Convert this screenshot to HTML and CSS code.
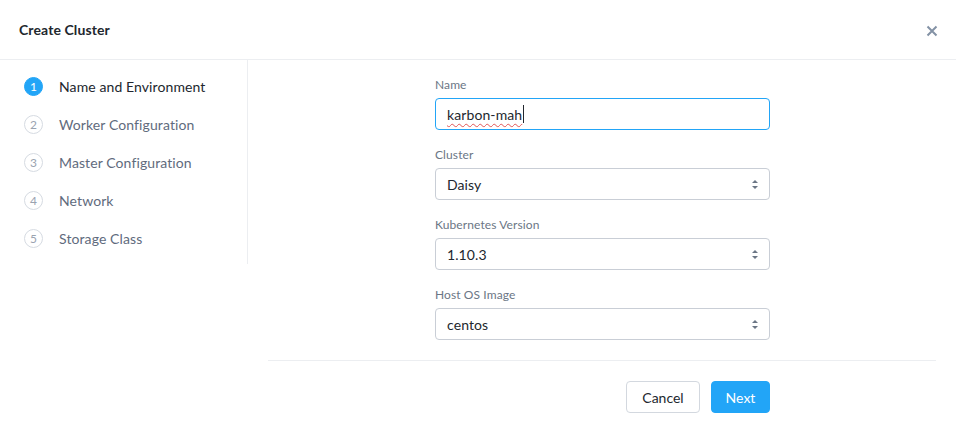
FILE: index.html
```html
<!DOCTYPE html>
<html>
<head>
<meta charset="utf-8">
<link rel="stylesheet" href="styles.css">
</head>
<body>
<div class="modal">
  <header class="head">
    <h1 class="title">Create Cluster</h1>
    <button class="close" aria-label="Close">
      <svg width="12" height="12" viewBox="0 0 12 12"><path d="M1.5 1.5 L10.5 10.5 M10.5 1.5 L1.5 10.5" stroke="#8392a5" stroke-width="2" stroke-linecap="butt"/></svg>
    </button>
  </header>
  <div class="body">
    <nav class="steps">
      <div class="step active"><span class="num">1</span><span class="lbl">Name and Environment</span></div>
      <div class="step"><span class="num">2</span><span class="lbl">Worker Configuration</span></div>
      <div class="step"><span class="num">3</span><span class="lbl">Master Configuration</span></div>
      <div class="step"><span class="num">4</span><span class="lbl">Network</span></div>
      <div class="step"><span class="num">5</span><span class="lbl">Storage Class</span></div>
    </nav>
    <main class="main">
      <form class="form">
        <div class="field">
          <label class="label">Name</label>
          <div class="input focused"><span class="spell">karbon-mah</span><span class="caret"></span></div>
        </div>
        <div class="field">
          <label class="label">Cluster</label>
          <div class="input select">Daisy<span class="arrows"></span></div>
        </div>
        <div class="field">
          <label class="label">Kubernetes Version</label>
          <div class="input select">1.10.3<span class="arrows"></span></div>
        </div>
        <div class="field">
          <label class="label">Host OS Image</label>
          <div class="input select">centos<span class="arrows"></span></div>
        </div>
      </form>
      <div class="footer">
        <button class="btn cancel" type="button">Cancel</button>
        <button class="btn next" type="button">Next</button>
      </div>
    </main>
  </div>
</div>
</body>
</html>
```
FILE: styles.css
```css
* { box-sizing: border-box; }
html, body { margin: 0; padding: 0; background: #fff; }
body { font-family: Lato, "Open Sans", sans-serif; color: #22272e; width: 956px; height: 426px; overflow: hidden; }

.head {
  height: 60px;
  border-bottom: 1px solid #eceef1;
  display: flex;
  align-items: center;
  justify-content: space-between;
  padding: 0 18px 0 19px;
}
.title { margin: 0; font-size: 14px; font-weight: 700; color: #22272e; letter-spacing: 0.1px; }
.close { background: none; border: 0; padding: 0; width: 12px; height: 12px; display: flex; margin-top: 3px; }

.body { display: flex; }
.steps {
  width: 248px;
  height: 204px;
  border-right: 1px solid #eceef1;
  padding: 17px 0 0 24px;
  display: flex;
  flex-direction: column;
  gap: 19px;
}
.step { display: flex; align-items: center; height: 19px; }
.num {
  width: 19px; height: 19px; border-radius: 50%;
  border: 1px solid #d6dbe2;
  font-size: 12px; color: #9aa3b0;
  display: flex; align-items: center; justify-content: center;
  margin-right: 16px;
}
.lbl { font-size: 14px; color: #5f6b7d; letter-spacing: 0.1px; }
.active .num { background: #22a5f7; border-color: #22a5f7; color: #fff; }
.active .lbl { color: #22272e; }

.main { flex: 1; padding: 0 20px 0 20px; }
.form { width: 335px; margin: 18px 0 0 167px; display: flex; flex-direction: column; gap: 18px; }
.field { display: flex; flex-direction: column; }
.label { font-size: 12px; color: #6b7685; height: 14px; line-height: 14px; margin-bottom: 6px; letter-spacing: 0.1px; }
.input {
  height: 32px; border: 1px solid #c9ced6; border-radius: 4px;
  padding: 0 11px; font-size: 14px; color: #22272e;
  display: flex; align-items: center; position: relative;
  letter-spacing: 0.1px;
}
.focused { border-color: #22a5f7; }
.spell { text-decoration: underline wavy #e25555; text-decoration-thickness: 1px; text-underline-offset: 3px; }
.caret { display: inline-block; width: 1px; height: 18px; background: #22272e; margin-left: 1px; }
.select { justify-content: space-between; }
.arrows { position: relative; width: 6px; height: 9px; }
.arrows::before, .arrows::after {
  content: ""; position: absolute; left: 0;
  border-left: 3px solid transparent; border-right: 3px solid transparent;
}
.arrows::before { top: 0; border-bottom: 3px solid #6b7685; }
.arrows::after { bottom: 0; border-top: 3px solid #6b7685; }

.footer {
  margin-top: 20px;
  border-top: 1px solid #eceef1;
  padding-top: 20px;
  display: flex;
  justify-content: flex-end;
  gap: 11px;
  padding-right: 166px;
}
.btn { height: 32px; border-radius: 4px; font-family: inherit; font-size: 14px; padding: 0; }
.cancel { width: 74px; background: #fff; border: 1px solid #d3d8df; color: #22272e; }
.next { width: 59px; background: #22a5f7; border: 1px solid #22a5f7; color: #fff; }
```
